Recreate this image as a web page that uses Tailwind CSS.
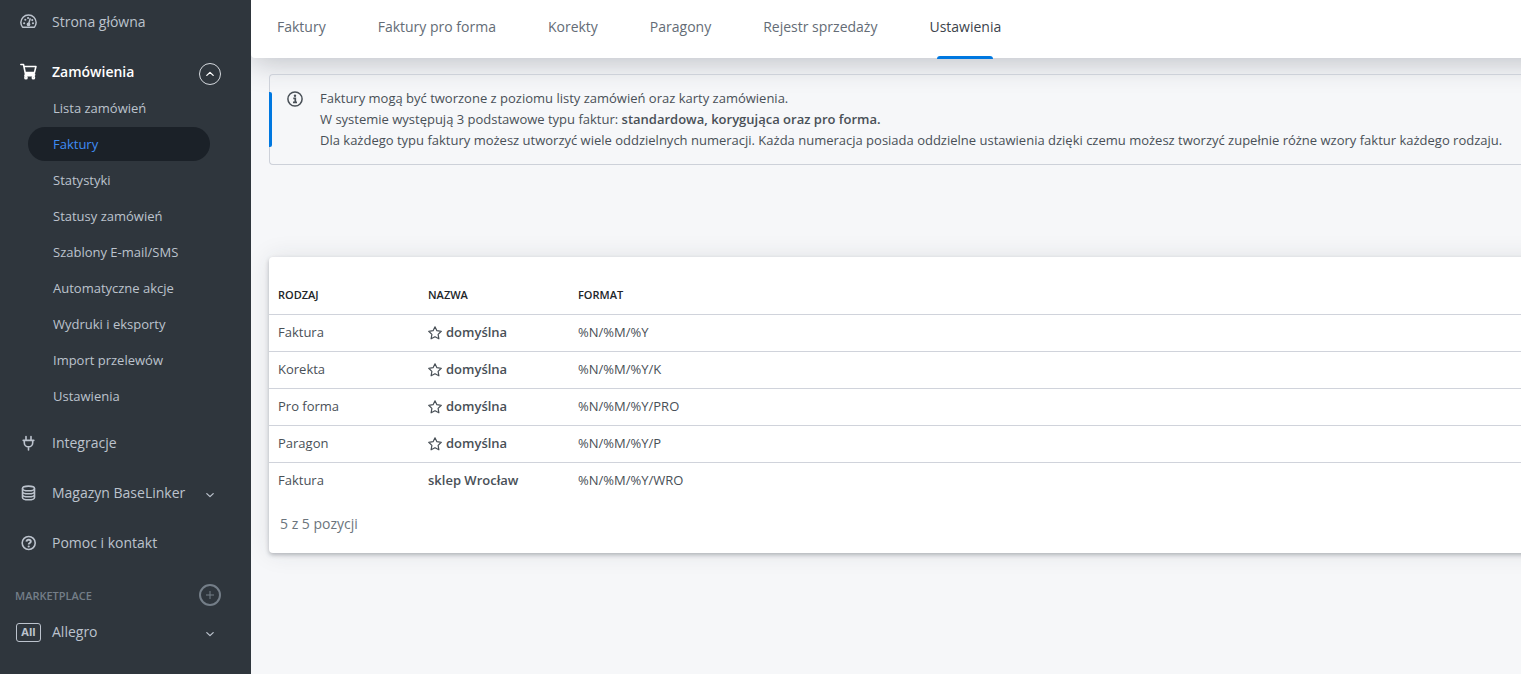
<!DOCTYPE html>
<html lang="pl">
<head>
<meta charset="utf-8">
<title>Ustawienia faktur</title>
<script src="https://cdn.jsdelivr.net/npm/@tailwindcss/browser@4"></script>
</head>
<body class="flex min-h-screen overflow-x-hidden bg-[#f6f7f9] font-['Open_Sans',sans-serif] text-[13px] text-[#495057]">
<svg class="hidden">
  <symbol id="star" viewBox="0 0 14 14"><path d="M7 .8 8.900 4.700l4.400.6-3.200 3.100.8 4.400L7 10.700l-3.900 2.100.8-4.400L.7 5.300l4.400-.6z" fill="none" stroke="currentColor" stroke-width="1.200" stroke-linejoin="round"/></symbol>
  <symbol id="down" viewBox="0 0 10 10"><path d="M1.800 3.600 5 6.600l3.200-3" fill="none" stroke="currentColor" stroke-width="1.300" stroke-linecap="round" stroke-linejoin="round"/></symbol>
</svg>
<aside class="w-[251px] shrink-0 bg-[#2f363d] text-sm text-[#bcc3cd]">
  <nav>
    <a href="#" class="flex h-[47px] items-center gap-4 pl-5 pb-1">
      <svg class="size-[17px] -mr-px" viewBox="0 0 16 16" fill="none" stroke="currentColor" stroke-width="1.400"><path d="M2.400 13.300A7.100 7.100 0 0 1 .8 9a7.200 7.200 0 0 1 14.400 0 7.100 7.100 0 0 1-1.600 4.300z" stroke-linejoin="round"/><path d="m9.700 5-1.500 5"/><circle cx="8" cy="10.700" r="1.100" fill="currentColor"/><g fill="currentColor" stroke="none"><circle cx="3.900" cy="9.600" r="1"/><circle cx="5" cy="6.300" r="1"/><circle cx="7.600" cy="4.700" r="1"/><circle cx="11.500" cy="6.700" r="1"/><circle cx="12.200" cy="9.600" r="1"/></g></svg>
      <span>Strona główna</span>
    </a>
    <div class="flex h-[43px] items-center justify-between pr-[30px] pl-5 text-white">
      <a href="#" class="flex items-center gap-4 pt-[6px] font-semibold">
        <svg class="size-[17px] -mr-px" viewBox="0 0 16 16" fill="none" stroke="currentColor" stroke-width="1.500" stroke-linecap="round" stroke-linejoin="round"><path d="M.8 1.400h2.500l1.900 9.200h8.600M3.800 3.300H15l-1.400 5.800H5"/><path d="M5.300 10.600 4.600 12h9"/><circle cx="5.600" cy="13.800" r="1"/><circle cx="12.600" cy="13.800" r="1"/></svg>
        <span>Zamówienia</span>
      </a>
      <button aria-label="Zwiń" class="mt-[10px] flex size-[22px] items-center justify-center rounded-full border border-[#d5d9de]"><svg class="size-[10px] rotate-180"><use href="#down"/></svg></button>
    </div>
    <ul class="pl-7 pr-[41px] text-[13px]">
      <li><a href="#" class="flex h-9 items-center pl-[25px]">Lista zamówień</a></li>
      <li class="py-px"><a href="#" class="flex h-[34px] items-center rounded-full bg-[#1b2128] pl-[25px] text-[#3f8cf4]">Faktury</a></li>
      <li><a href="#" class="flex h-9 items-center pl-[25px]">Statystyki</a></li>
      <li><a href="#" class="flex h-9 items-center pl-[25px]">Statusy zamówień</a></li>
      <li><a href="#" class="flex h-9 items-center pl-[25px]">Szablony E-mail/SMS</a></li>
      <li><a href="#" class="flex h-9 items-center pl-[25px]">Automatyczne akcje</a></li>
      <li><a href="#" class="flex h-9 items-center pl-[25px]">Wydruki i eksporty</a></li>
      <li><a href="#" class="flex h-9 items-center pl-[25px]">Import przelewów</a></li>
      <li><a href="#" class="flex h-9 items-center pl-[25px]">Ustawienia</a></li>
    </ul>
    <div class="mt-1">
      <a href="#" class="flex h-[50px] items-center gap-4 pl-5">
        <svg class="size-4" viewBox="0 0 16 16" fill="none" stroke="currentColor" stroke-width="1.600" stroke-linecap="round"><path d="M6 1.500v3.300m5-3.300v3.300M3.200 5.400h10.600M4.300 5.700v2a4.200 4.200 0 0 0 8.400 0v-2M8.500 12v3"/></svg>
        <span>Integracje</span>
      </a>
      <a href="#" class="flex h-[50px] items-center gap-4 pr-9 pl-5">
        <svg class="size-4" viewBox="0 0 16 16" fill="none" stroke="currentColor" stroke-width="1.600"><ellipse cx="8.500" cy="3.400" rx="6" ry="2.300"/><path d="M2.500 3.400v9c0 1.300 2.700 2.300 6 2.300s6-1 6-2.300v-9M2.500 6.400c0 1.300 2.700 2.300 6 2.300s6-1 6-2.300M2.500 9.400c0 1.300 2.700 2.300 6 2.300s6-1 6-2.300"/></svg>
        <span class="grow">Magazyn BaseLinker</span>
        <svg class="mt-1 size-[10px]"><use href="#down"/></svg>
      </a>
      <a href="#" class="flex h-[50px] items-center gap-4 pl-5">
        <svg class="size-4" viewBox="0 0 16 16" fill="none" stroke="currentColor" stroke-width="1.600"><circle cx="8.700" cy="8" r="6.500"/><path d="M6.500 6.600c.1-1.200 1-1.800 2.200-1.800s2.100.7 2.100 1.700c0 1.500-2.100 1.400-2.100 2.900" stroke-width="1.900"/><circle cx="8.700" cy="11.500" r="1.100" fill="currentColor" stroke="none"/></svg>
        <span>Pomoc i kontakt</span>
      </a>
    </div>
    <div class="mt-4 flex items-center justify-between pr-[30px] pl-[15px] text-[11px] font-semibold text-[#747e88]">
      <h2 class="pt-[2px]">MARKETPLACE</h2>
      <button aria-label="Dodaj" class="flex size-[22px] items-center justify-center rounded-full border-2 border-[#747e88]"><svg class="size-2" viewBox="0 0 8 8" stroke="currentColor"><path d="M4 0v8M0 4h8"/></svg></button>
    </div>
    <a href="#" class="mt-1 flex h-11 items-center gap-[11px] pr-9 pl-4">
      <span class="flex h-[19px] w-[25px] items-center justify-center rounded-[3px] border border-[#bcc3cd] text-[11px] font-bold">All</span>
      <span class="grow">Allegro</span>
      <svg class="mt-1 size-[10px]"><use href="#down"/></svg>
    </a>
  </nav>
</aside>
<main class="min-w-0 flex-1 overflow-hidden">
  <header class="-mr-10 rounded-bl-[4px] bg-white shadow-[0_4px_30px_rgba(40,45,65,0.28)]">
    <nav class="flex h-[58px] gap-[52px] pl-[26px] text-sm whitespace-nowrap text-[#646c76]">
      <a href="#" class="pt-[17px]">Faktury</a>
      <a href="#" class="pt-[17px]">Faktury pro forma</a>
      <a href="#" class="pt-[17px]">Korekty</a>
      <a href="#" class="pt-[17px]">Paragony</a>
      <a href="#" class="pt-[17px]">Rejestr sprzedaży</a>
      <a href="#" aria-current="page" class="relative pt-[17px] text-[#3c434b]">Ustawienia<span class="absolute inset-x-2 -bottom-px h-[3px] rounded-t-[3px] bg-[#0078e0]"></span></a>
    </nav>
  </header>
  <section class="relative mt-4 ml-[18px] flex rounded-l-[4px] border border-r-0 border-[#cdd1d9] pt-[13px] pb-[13px] pl-[17px] leading-[21px]">
    <span class="absolute top-[17px] -left-px h-[55px] w-[3px] rounded-r-[2px] bg-[#0078e0]"></span>
    <svg class="mt-[3px] mr-[17px] size-4 shrink-0" viewBox="0 0 16 16" fill="none" stroke="currentColor"><circle cx="8" cy="8" r="7.100" stroke-width="1.500"/><path d="M6.300 7.300h2v4M6 11.400h4" stroke-width="1.700"/><circle cx="8" cy="4.700" r="1.200" fill="currentColor" stroke="none"/></svg>
    <p class="whitespace-nowrap">Faktury mogą być tworzone z poziomu listy zamówień oraz karty zamówienia.<br>W systemie występują 3 podstawowe typu faktur: <b class="font-semibold">standardowa, korygująca oraz pro forma.</b><br>Dla każdego typu faktury możesz utworzyć wiele oddzielnych numeracji. Każda numeracja posiada oddzielne ustawienia dzięki czemu możesz tworzyć zupełnie różne wzory faktur każdego rodzaju.</p>
  </section>
  <section class="-mr-10 mt-[92px] ml-[18px] rounded-l-[4px] bg-white pt-5 pb-[19px] shadow-[0_2px_4px_rgba(40,45,60,0.3),0_0_24px_rgba(40,45,60,0.1)]">
    <table class="w-full table-fixed text-left">
      <colgroup><col class="w-[150px]"><col class="w-[150px]"><col></colgroup>
      <thead class="text-[11px] text-[#212529]">
        <tr class="h-[37px] border-b border-[#d0d3db]"><th class="pl-[9px] font-semibold">RODZAJ</th><th class="pl-[9px] font-semibold">NAZWA</th><th class="pl-[9px] font-semibold">FORMAT</th></tr>
      </thead>
      <tbody>
        <tr class="h-[37px] border-b border-[#d0d3db]"><td class="pl-[9px]">Faktura</td><td class="pl-[9px] font-semibold"><span class="flex items-center gap-1"><svg class="size-[14px]"><use href="#star"/></svg>domyślna</span></td><td class="pl-[9px]">%N/%M/%Y</td></tr>
        <tr class="h-[37px] border-b border-[#d0d3db]"><td class="pl-[9px]">Korekta</td><td class="pl-[9px] font-semibold"><span class="flex items-center gap-1"><svg class="size-[14px]"><use href="#star"/></svg>domyślna</span></td><td class="pl-[9px]">%N/%M/%Y/K</td></tr>
        <tr class="h-[37px] border-b border-[#d0d3db]"><td class="pl-[9px]">Pro forma</td><td class="pl-[9px] font-semibold"><span class="flex items-center gap-1"><svg class="size-[14px]"><use href="#star"/></svg>domyślna</span></td><td class="pl-[9px]">%N/%M/%Y/PRO</td></tr>
        <tr class="h-[37px] border-b border-[#d0d3db]"><td class="pl-[9px]">Paragon</td><td class="pl-[9px] font-semibold"><span class="flex items-center gap-1"><svg class="size-[14px]"><use href="#star"/></svg>domyślna</span></td><td class="pl-[9px]">%N/%M/%Y/P</td></tr>
        <tr class="h-[37px]"><td class="pl-[9px]">Faktura</td><td class="pl-[9px] font-semibold">sklep Wrocław</td><td class="pl-[9px]">%N/%M/%Y/WRO</td></tr>
      </tbody>
    </table>
    <p class="mt-[15px] pl-[11px] text-sm text-[#6c757d]">5 z 5 pozycji</p>
  </section>
</main>
</body>
</html>
